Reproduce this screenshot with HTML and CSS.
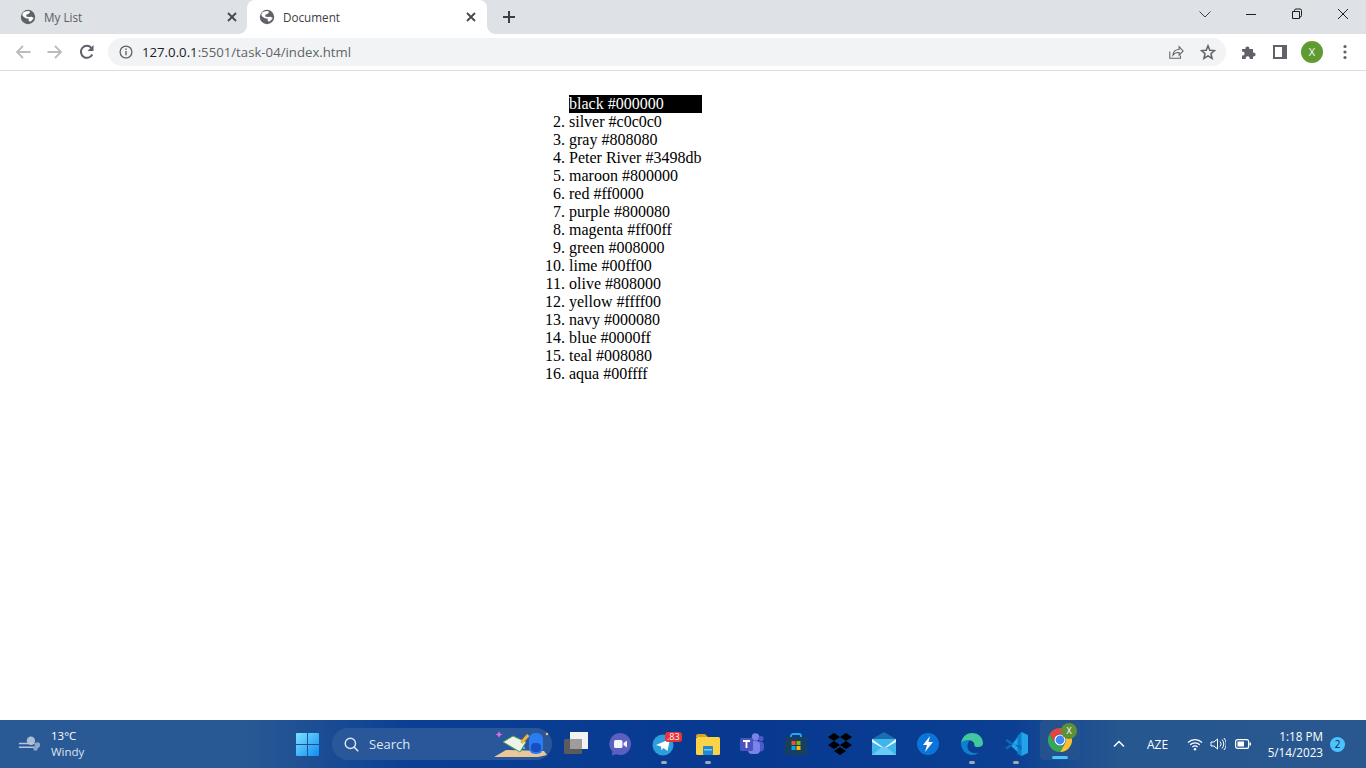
FILE: index.html
```html
<!DOCTYPE html>
<html lang="en">
<head>
<meta charset="utf-8">
<title>Document</title>
<link rel="stylesheet" href="styles.css">
</head>
<body>
<svg class="defs" width="0" height="0" aria-hidden="true">
  <symbol id="globe" viewBox="0 0 16 16">
    <circle cx="8" cy="8" r="7.2" fill="#5f6368"/>
    <path d="M3.500 3.200 6 2.200 9.500 2 9.800 3.800 8 5.200 6.500 5.500 6.200 7.500 8.800 8 11.500 7.800 13.800 9 11.800 11.500 10 12.800 8.500 11.500 8.800 9.800 5.800 9.200 3.200 7.500 2.200 5.500Z" fill="#fff"/>
  </symbol>
  <symbol id="close" viewBox="0 0 10 10">
    <path d="M1 1 9 9M9 1 1 9" stroke="#44474c" stroke-width="1.800" fill="none"/>
  </symbol>
</svg>

<header class="browser">
  <div class="tabstrip">
    <div class="tab tab-first">
      <svg class="favicon"><use href="#globe"/></svg>
      <span class="tab-title tab-title-dim">My List</span>
      <svg class="tab-close"><use href="#close"/></svg>
    </div>
    <div class="tab tab-active">
      <svg class="favicon"><use href="#globe"/></svg>
      <span class="tab-title">Document</span>
      <svg class="tab-close"><use href="#close"/></svg>
    </div>
    <svg class="new-tab" viewBox="0 0 14 14"><path d="M7 1v12M1 7h12" stroke="#3c4043" stroke-width="2" fill="none"/></svg>
    <div class="window-controls">
      <svg class="win-btn" viewBox="0 0 46 28"><path d="m17.500 11.500 5.500 5.500 5.500-5.500" stroke="#3c4043" fill="none"/></svg>
      <svg class="win-btn" viewBox="0 0 46 28"><path d="M18 14.500h10" stroke="#1f1f1f" fill="none"/></svg>
      <svg class="win-btn" viewBox="0 0 46 28"><path d="M18.500 11.500h7v7h-7zM20.500 11.500v-1a1.500 1.500 0 0 1 1.500-1.500h4a1.500 1.500 0 0 1 1.500 1.500v5a1.500 1.500 0 0 1-1.500 1.500h-.5" stroke="#1f1f1f" fill="none"/></svg>
      <svg class="win-btn" viewBox="0 0 46 28"><path d="m18 9 10 10M28 9 18 19" stroke="#1f1f1f" fill="none"/></svg>
    </div>
  </div>
  <div class="toolbar">
    <svg class="nav-icon" viewBox="0 0 16 16"><path d="M15.500 8H2M8 2 2 8l6 6" stroke="#babcbe" stroke-width="1.800" fill="none"/></svg>
    <svg class="nav-icon" viewBox="0 0 16 16"><path d="M.5 8H14M8 2l6 6-6 6" stroke="#babcbe" stroke-width="1.800" fill="none"/></svg>
    <svg class="nav-icon" viewBox="0 0 16 16"><path d="M13.300 10.500A6 6 0 1 1 12.400 3.800" stroke="#5f6368" stroke-width="2" fill="none"/><path d="M14.500 1v6h-6z" fill="#5f6368"/></svg>
    <div class="omnibox">
      <svg class="info" viewBox="0 0 14 14"><circle cx="7" cy="7" r="5.900" stroke="#5f6368" stroke-width="1.300" fill="none"/><path d="M7 6v4.300M7 3.600v1.300" stroke="#5f6368" stroke-width="1.400"/></svg>
      <span class="url"><span class="url-host">127.0.0.1</span>:5501/task-04/index.html</span>
      <svg class="omni-icon" viewBox="0 0 18 18"><path d="M2 8.500V16h12v-3M5.500 12.500c.5-4 3.500-6.300 7-6.300V3l4.500 4.800-4.500 4.700V9.500c-3-.2-5.300.7-7 3Z" stroke="#5f6368" stroke-width="1.200" fill="none"/></svg>
      <svg class="omni-icon omni-star" viewBox="0 0 18 18"><path d="m9 2 2 5 5.400.4-4.100 3.500 1.300 5.300L9 13.300l-4.600 2.900 1.300-5.300L1.600 7.400 7 7Z" stroke="#5f6368" stroke-width="1.700" fill="none"/></svg>
    </div>
    <svg class="tool-icon tool-puzzle" viewBox="0 0 16 16"><path d="M1 5h3.500a2 2 0 1 1 3.800 0H12v3.600a2 2 0 1 1 0 3.800V15H8.500a2 2 0 1 0-3.600 0H1v-3.500a2 2 0 1 0 0-3.800Z" fill="#5f6368"/></svg>
    <svg class="tool-icon tool-panel" viewBox="0 0 14 14"><path d="M0 0h14v14H0z" fill="#5f6368"/><path d="M2 2h7v10H2z" fill="#fff"/></svg>
    <span class="avatar">X</span>
    <svg class="tool-icon tool-menu" viewBox="0 0 4 16"><circle cx="2" cy="2.500" r="1.600" fill="#5f6368"/><circle cx="2" cy="8" r="1.600" fill="#5f6368"/><circle cx="2" cy="13.500" r="1.600" fill="#5f6368"/></svg>
  </div>
</header>

<main class="page">
  <ol class="colors">
    <li class="first">black #000000</li>
    <li>silver #c0c0c0</li>
    <li>gray #808080</li>
    <li>Peter River #3498db</li>
    <li>maroon #800000</li>
    <li>red #ff0000</li>
    <li>purple #800080</li>
    <li>magenta #ff00ff</li>
    <li>green #008000</li>
    <li>lime #00ff00</li>
    <li>olive #808000</li>
    <li>yellow #ffff00</li>
    <li>navy #000080</li>
    <li>blue #0000ff</li>
    <li>teal #008080</li>
    <li>aqua #00ffff</li>
  </ol>
</main>

<footer class="taskbar">
  <div class="weather">
    <svg class="weather-icon" viewBox="0 0 26 18"><circle cx="14" cy="5.500" r="4.500" fill="#a9bdd6"/><path d="M1 8.500h17M1 12.500h21" stroke="#b7c6da" stroke-width="1.600"/><circle cx="21" cy="10" r="3" fill="#8ea6c4"/><circle cx="19" cy="14" r="2.400" fill="#8ea6c4"/></svg>
    <div class="weather-text"><span class="temp">13°C</span><span class="cond">Windy</span></div>
  </div>
  <svg class="start" viewBox="0 0 24 24">
    <defs><linearGradient id="win" x1="0" y1="0" x2="1" y2="1"><stop offset="0" stop-color="#7be3ff"/><stop offset="1" stop-color="#0f8cf0"/></linearGradient></defs>
    <path d="M0 1a1 1 0 0 1 1-1h10.500v11.500H0zM12.500 0H23a1 1 0 0 1 1 1v10.500H12.500zM0 12.500h11.500V24H1a1 1 0 0 1-1-1zM12.500 12.500H24V23a1 1 0 0 1-1 1H12.500z" fill="url(#win)"/>
  </svg>
  <div class="search">
    <svg class="search-icon" viewBox="0 0 16 16"><circle cx="6.800" cy="6.800" r="5.500" stroke="#dfe7f2" stroke-width="1.500" fill="none"/><path d="m10.800 10.800 4.400 4.400" stroke="#dfe7f2" stroke-width="1.600"/></svg>
    <span class="search-text">Search</span>
    <svg class="search-art" viewBox="0 0 58 32">
      <path d="M0 29 12 22 50 23 53 27 44 29Z" fill="#e9c79a"/>
      <path d="m9 14 10-6 13 6-6 10Z" fill="#eef3e8" stroke="#4f9a55"/>
      <path d="m26 14 7-8 2.500 2-7 8Z" fill="#f0b040"/>
      <path d="m5 3 1 2.500 2.500 1-2.500 1-1 2.500-1-2.500L1.500 6.500l2.500-1z" fill="#e070e8"/>
      <circle cx="30" cy="20" r="1.300" fill="#38b6e8"/>
      <rect x="35" y="5" width="14" height="21" rx="6" fill="#2a7cf0"/>
      <rect x="37" y="15" width="10" height="9" rx="4" fill="#174ec0"/>
      <circle cx="53" cy="6" r="1.300" fill="#f0c040"/>
    </svg>
  </div>
  <div class="apps">
    <span class="app"><svg class="app-icon" viewBox="0 0 24 24"><rect y="7" width="18" height="15" rx="1.500" fill="#5b5b5b"/><rect x="6" y="0" width="18" height="17" fill="#f2f2f2"/><rect x="6" y="7" width="12" height="10" fill="#9d9d9d"/></svg></span>
    <span class="app"><svg class="app-icon" viewBox="0 0 24 24"><path d="M12 1a11 11 0 1 1-4 21.200L4 23.500l.3-4A11 11 0 0 1 12 1Z" fill="#5a5fc0"/><rect x="6" y="8" width="8.500" height="8" rx="1.500" fill="#f4f4fc"/><path d="m15.500 11 3.500-2.500v7L15.500 13Z" fill="#f4f4fc"/></svg></span>
    <span class="app app-open"><svg class="app-icon" viewBox="0 0 24 24"><circle cx="11" cy="13" r="10.500" fill="#2a9fdc"/><path d="m4 13 14-6-2.500 12-4-3-2 2.300-.5-3.800Z" fill="#fff"/></svg><span class="badge">.83</span></span>
    <span class="app app-open"><svg class="app-icon" viewBox="0 0 24 24"><path d="M0 4a2 2 0 0 1 2-2h7l3 3H0z" fill="#d9a21f"/><rect y="5" width="24" height="18" rx="1.500" fill="#fbd245"/><rect x="7" y="14" width="10" height="9" rx="1" fill="#1f89d1"/><rect x="8" y="17" width="8" height="1.500" fill="#7fc4f0"/></svg></span>
    <span class="app"><svg class="app-icon" viewBox="0 0 24 24"><circle cx="15.500" cy="5" r="3.800" fill="#7b83eb"/><circle cx="21" cy="6.500" r="2.600" fill="#5059c9"/><rect x="15" y="9.500" width="9" height="10" rx="3.500" fill="#5059c9"/><rect x="8" y="9" width="12" height="13" rx="4" fill="#7b83eb"/><rect y="6" width="13" height="13" rx="1.500" fill="#4b53bc"/><path d="M3 9h7M6.500 9v7" stroke="#fff" stroke-width="1.800"/></svg></span>
    <span class="app"><svg class="app-icon" viewBox="0 0 24 24"><path d="M7 6V4a2 2 0 0 1 2-2h6a2 2 0 0 1 2 2v2" stroke="#31a5e0" stroke-width="1.800" fill="none"/><rect x="1" y="5" width="22" height="18" rx="2" fill="#17405f"/><rect x="7.500" y="9" width="4" height="4" fill="#f25022"/><rect x="12.500" y="9" width="4" height="4" fill="#7fba00"/><rect x="7.500" y="14" width="4" height="4" fill="#00a4ef"/><rect x="12.500" y="14" width="4" height="4" fill="#ffb900"/></svg></span>
    <span class="app"><svg class="app-icon" viewBox="0 0 24 24"><path d="m6 1 6 4-6 4-6-4Zm12 0 6 4-6 4-6-4ZM6 9l6 4-6 4-6-4Zm12 0 6 4-6 4-6-4ZM12 15l6 4-6 4-6-4Z" fill="#000"/></svg></span>
    <span class="app"><svg class="app-icon" viewBox="0 0 24 24"><path d="M0 7 12 0l12 7v1H0z" fill="#1a6fb0"/><rect y="7" width="24" height="16" fill="#3fb5ee"/><path d="m0 7 12 9 12-9v3l-12 7L0 10Z" fill="#eaf7ff"/><path d="m0 23 10-8 2 1 2-1 10 8Z" fill="#6acbf5"/></svg></span>
    <span class="app"><svg class="app-icon" viewBox="0 0 24 24"><circle cx="12" cy="12" r="11" fill="#0b73d9"/><path d="M14 4 7 13h4l-2 7 8-10h-4.500Z" fill="#fff"/></svg></span>
    <span class="app app-open"><svg class="app-icon" viewBox="0 0 24 24"><path d="M1 11C2 5 6.500 1 12 1c6.500 0 11 4.500 11 10.500 0 2-2 3.500-5 3.500-2 0-3.500-.5-3.500-1.500 0-3-2-5-5-5-3.500 0-5 3-5 6C3 12 1 13 1 11Z" fill="#41c8a0"/><path d="M1 11c0 7 5 12 11 12 3 0 5-1 7-2.500-5 1.500-11 0-11.500-5.500C7 11 10 8 10 8c-5 0-8.500 1-9 3Z" fill="#0f7fd0"/></svg></span>
    <span class="app app-open"><svg class="app-icon" viewBox="0 0 24 24"><path d="M17.500 0 24 3v18l-6.500 3L7 13.800Z" fill="#22a4ec"/><path d="M17.500 0v24l-4-2V4Z" fill="#0f7fcc"/><path d="M1.500 8.500 3.500 7l14 11v-4.500L6.500 12 1 16l2 1.500 4.500-3.500Z" fill="#0a6cb5"/></svg></span>
    <span class="app app-active"><svg class="app-icon" viewBox="0 0 24 24"><path d="M12 0A12 12 0 0 1 22.400 6H12A6 6 0 0 0 6.800 15L1.600 6A12 12 0 0 1 12 0Z" fill="#e8453a"/><path d="M22.400 6A12 12 0 0 1 12 24L17.200 15A6 6 0 0 0 12 6Z" fill="#fbc02d"/><path d="M1.600 6A12 12 0 0 0 12 24L17.200 15A6 6 0 0 1 6.800 15Z" fill="#34a853"/><circle cx="12" cy="12" r="5.600" fill="#fff"/><circle cx="12" cy="12" r="4.400" fill="#4285f4"/></svg><span class="chrome-profile">X</span></span>
  </div>
  <div class="tray">
    <svg class="chevron" viewBox="0 0 12 8"><path d="m1 6.500 5-5 5 5" stroke="#fff" stroke-width="1.500" fill="none"/></svg>
    <span class="lang">AZE</span>
    <svg class="tray-wifi" viewBox="0 0 16 13"><path d="M1 4.500a10 10 0 0 1 14 0M3.200 6.800a7 7 0 0 1 9.600 0M5.400 9a4 4 0 0 1 5.200 0" stroke="#fff" stroke-width="1.200" fill="none"/><circle cx="8" cy="11.300" r="1.200" fill="#fff"/></svg>
    <svg class="tray-sound" viewBox="0 0 16 14"><path d="M1 5h3l3.500-3v10L4 9H1Z" stroke="#fff" fill="none"/><path d="M10 4.500a3.500 3.500 0 0 1 0 5M12 2.500a6.500 6.500 0 0 1 0 9M14 1a9 9 0 0 1 0 12" stroke="#fff" fill="none"/></svg>
    <svg class="tray-battery" viewBox="0 0 16 10"><rect x=".6" y=".6" width="13" height="8.800" rx="2" stroke="#fff" stroke-width="1.200" fill="none"/><rect x="2.500" y="2.500" width="6.500" height="5" fill="#fff"/><rect x="14.500" y="3.500" width="1.500" height="3" fill="#fff"/></svg>
    <div class="clock"><span>1:18 PM</span><span>5/14/2023</span></div>
    <span class="notif">2</span>
  </div>
</footer>
</body>
</html>
```

FILE: styles.css
```css
* { box-sizing: border-box; }

html, body { height: 100%; }

body {
  margin: 0;
  height: 768px;
  overflow: hidden;
  display: flex;
  flex-direction: column;
  background: #fff;
  font-family: "Open Sans", "Liberation Sans", sans-serif;
}

.defs { position: absolute; }

/* browser chrome */
.browser { flex: none; }

.tabstrip {
  height: 34px;
  display: flex;
  align-items: flex-start;
  background: #dee1e6;
  padding-left: 8px;
}

.tab {
  position: relative;
  width: 239px;
  height: 34px;
  display: flex;
  align-items: center;
  padding: 0 10px 0 12px;
}

.tab-first { padding-right: 9px; }

.tab-active {
  width: 240px;
  background: #fff;
  border-radius: 8px 8px 0 0;
}

.tab-active::before,
.tab-active::after {
  content: "";
  position: absolute;
  bottom: 0;
  width: 8px;
  height: 8px;
}

.tab-active::before {
  left: -8px;
  background: radial-gradient(circle at 0 0, #dee1e6 7.5px, #fff 8px);
}

.tab-active::after {
  right: -8px;
  background: radial-gradient(circle at 100% 0, #dee1e6 7.5px, #fff 8px);
}

.favicon { width: 16px; height: 16px; flex: none; }

.tab-title {
  flex: 1;
  margin-left: 8px;
  padding-bottom: 1px;
  font-size: 11.700px;
  color: #3c4043;
}

.tab-title-dim { color: #5a5d62; }

.tab-close { width: 10px; height: 10px; flex: none; margin-right: 1px; }

.new-tab { width: 14px; height: 14px; margin: 10px 0 0 15px; flex: none; }

.window-controls { margin-left: auto; display: flex; }

.win-btn { width: 46px; height: 28px; display: block; }

.toolbar {
  height: 37px;
  display: flex;
  align-items: center;
  padding: 2px 0 2px 15px;
  background: #fff;
  border-bottom: 1px solid #dadce0;
}

.nav-icon { width: 16px; height: 16px; flex: none; margin-right: 16px; }

.omnibox {
  width: 1118px;
  height: 28px;
  margin-left: -3px;
  display: flex;
  align-items: center;
  padding: 0 10px 0 11px;
  background: #f1f3f4;
  border-radius: 14px;
}

.info { width: 14px; height: 14px; flex: none; }

.url {
  flex: 1;
  margin-left: 9px;
  font-size: 13.200px;
  color: #5f6368;
}

.url-host { color: #202124; }

.omni-icon { width: 16px; height: 16px; flex: none; margin-left: 16px; }

.tool-icon { flex: none; }

.tool-puzzle { width: 16px; height: 16px; margin-left: 15px; }

.tool-panel { width: 14px; height: 14px; margin-left: 16px; }

.avatar {
  flex: none;
  width: 22px;
  height: 22px;
  margin-left: 14px;
  border-radius: 50%;
  background: #5f9a32;
  color: #fff;
  font-size: 11px;
  line-height: 22px;
  text-align: center;
}

.tool-menu { width: 4px; height: 16px; margin-left: 20px; }

/* page content */
.page {
  flex: 1;
  min-height: 0;
  padding: 24px 0 0 529px;
  font-family: "Liberation Serif", "Times New Roman", serif;
  font-size: 16px;
  line-height: 18px;
  color: #000;
}

.colors {
  width: 173px;
  margin: 0;
  padding-left: 40px;
}

.first { background: #000; color: #fff; }

/* taskbar */
.taskbar {
  flex: none;
  height: 48px;
  display: flex;
  align-items: center;
  color: #fff;
  background: linear-gradient(90deg, #2a5a96 0, #295994 18%, #0b3f94 30%, #06398f 55%, #0b3f94 74%, #27578f 82%, #28588f 100%);
}

.weather {
  width: 296px;
  flex: none;
  display: flex;
  align-items: center;
  padding-left: 18px;
}

.weather-icon { width: 24px; height: 18px; flex: none; }

.weather-text {
  display: flex;
  flex-direction: column;
  margin-left: 9px;
  font-size: 11.500px;
  line-height: 16px;
}

.cond { color: #dbe3ee; }

.start { width: 23px; height: 23px; flex: none; }

.search {
  position: relative;
  width: 220px;
  height: 32px;
  flex: none;
  margin-left: 13px;
  display: flex;
  align-items: center;
  padding-left: 12px;
  border-radius: 16px;
  background: #2a5799;
}

.search-icon { width: 15px; height: 15px; flex: none; }

.search-text {
  margin-left: 10px;
  font-size: 13px;
  color: #dfe7f2;
}

.search-art {
  position: absolute;
  right: 0;
  top: 0;
  width: 58px;
  height: 32px;
}

.apps { display: flex; flex: none; margin-left: 2px; }

.app {
  position: relative;
  width: 44px;
  height: 48px;
  display: flex;
  align-items: center;
  justify-content: center;
}

.app-icon { width: 24px; height: 24px; }

.app-open::after,
.app-active::after {
  content: "";
  position: absolute;
  bottom: 4px;
  left: 50%;
  width: 6px;
  height: 3px;
  margin-left: -3px;
  border-radius: 2px;
  background: #9aa9c0;
}

.app-active {
  background: #23528f;
  border-radius: 4px;
  width: 40px;
  height: 40px;
  margin-left: 2px;
}

.app-active::after {
  width: 16px;
  margin-left: -8px;
  bottom: 1px;
  background: #4cc2ff;
}

.badge {
  position: absolute;
  top: 12px;
  left: 23px;
  padding: 0 2px;
  border-radius: 3px;
  background: #e8323c;
  font-size: 9px;
  line-height: 10px;
}

.chrome-profile {
  position: absolute;
  top: 3px;
  left: 21px;
  width: 16px;
  height: 16px;
  border-radius: 50%;
  background: #5f8f37;
  font-size: 9px;
  line-height: 16px;
  text-align: center;
}

.tray {
  flex: 1;
  display: flex;
  align-items: center;
  padding-left: 33px;
  font-size: 12px;
}

.chevron { width: 12px; height: 8px; flex: none; }

.lang { margin-left: 22px; width: 26px; font-size: 12px; }

.tray-wifi { width: 16px; height: 13px; margin-left: 14px; flex: none; }

.tray-sound { width: 16px; height: 14px; margin-left: 7px; flex: none; }

.tray-battery { width: 16px; height: 10px; margin-left: 9px; flex: none; }

.clock {
  width: 72px;
  flex: none;
  display: flex;
  flex-direction: column;
  align-items: flex-end;
  font-size: 11.700px;
  line-height: 16px;
}

.notif {
  width: 15px;
  height: 15px;
  margin-left: 7px;
  border-radius: 50%;
  background: #4cc2ff;
  color: #0a1f3c;
  font-size: 10px;
  line-height: 15px;
  text-align: center;
}
```
